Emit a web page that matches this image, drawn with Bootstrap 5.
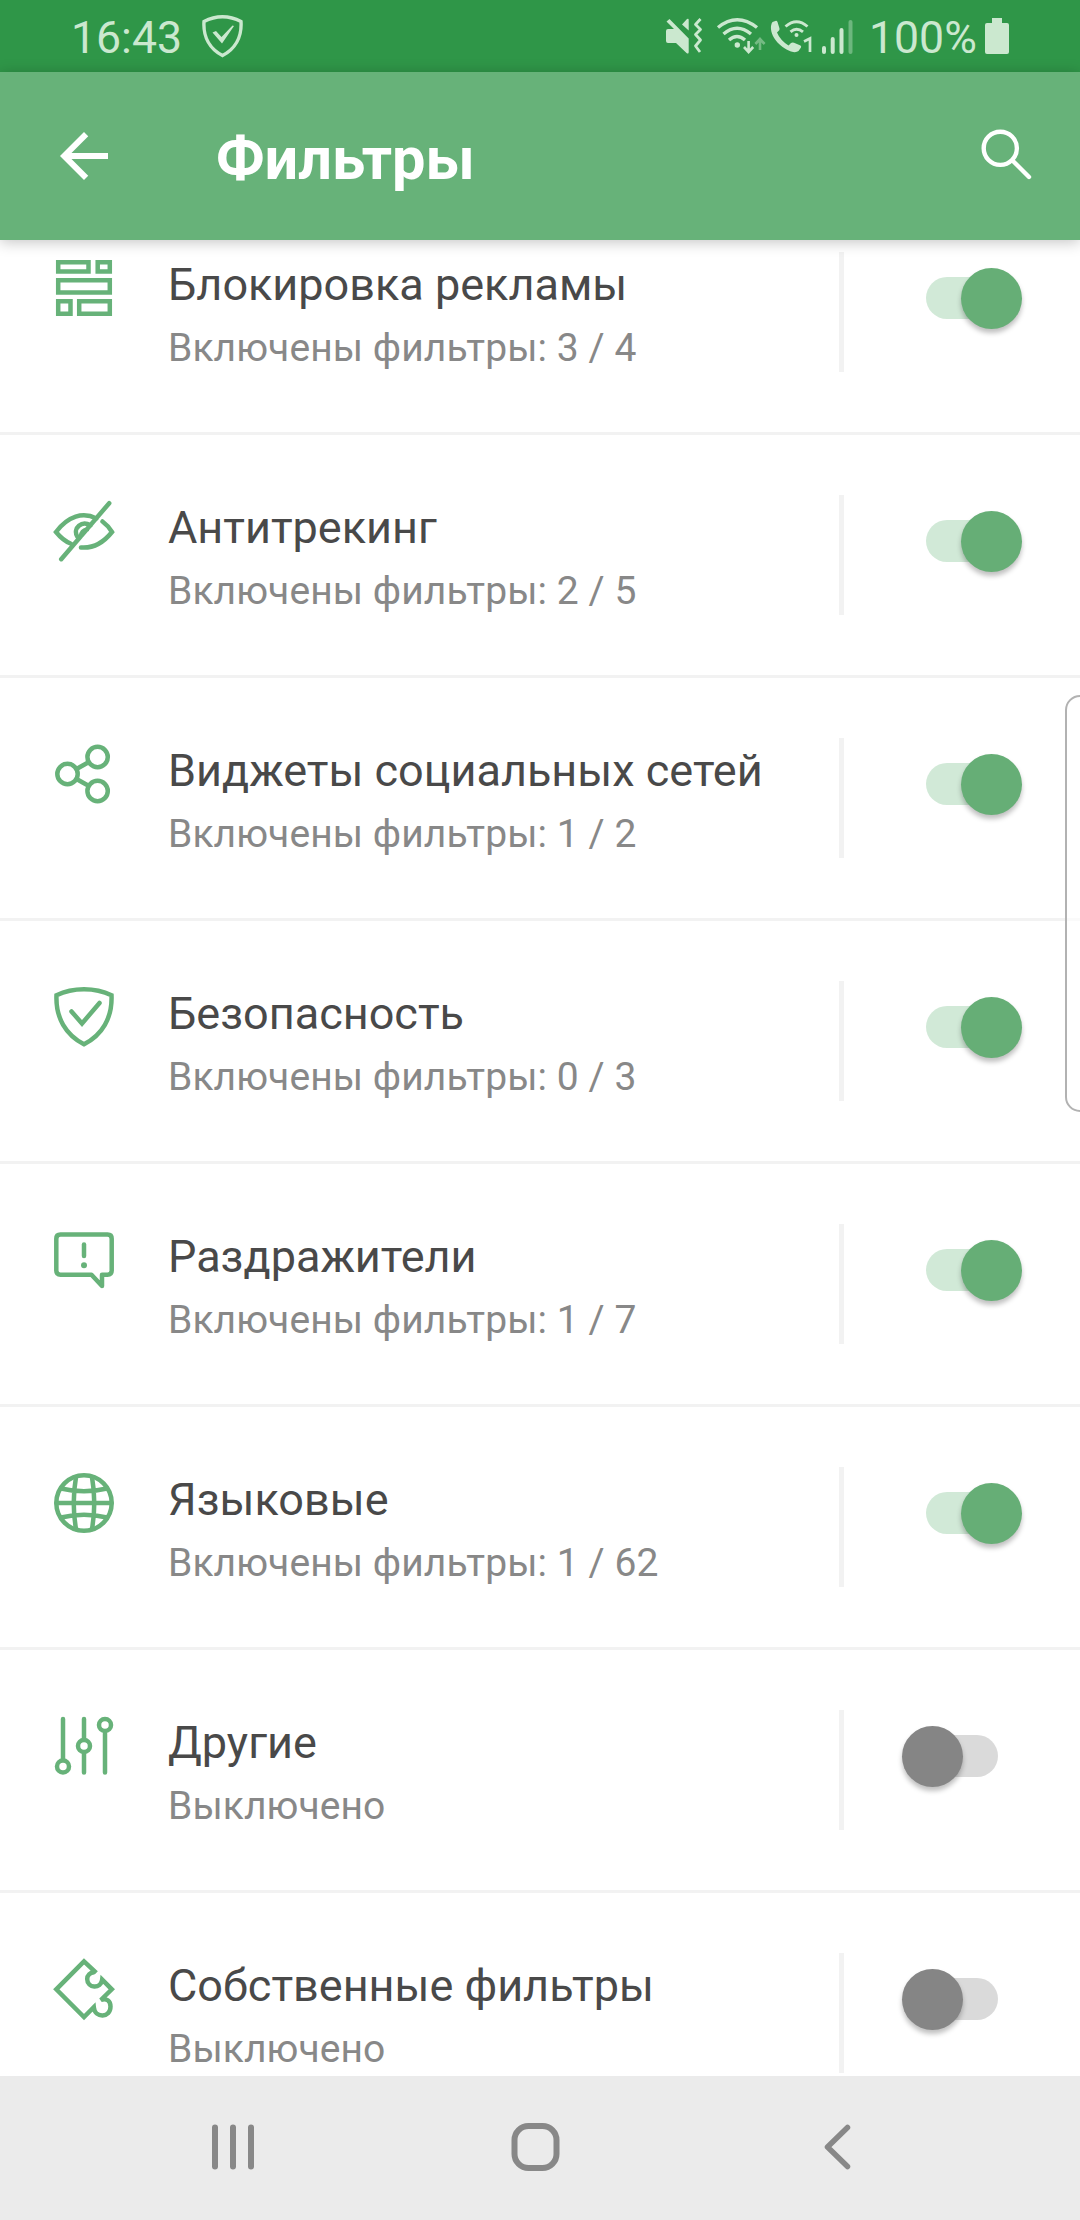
<!DOCTYPE html>
<html lang="ru">
<head>
<meta charset="utf-8">
<meta name="viewport" content="width=device-width, initial-scale=1">
<title>Фильтры</title>
<link href="https://cdn.jsdelivr.net/npm/bootstrap@5.3.0/dist/css/bootstrap.min.css" rel="stylesheet">
<style>
  :root { --leaf: #67b279; }
  body { font-family: Roboto, "Noto Sans", sans-serif; background: #fff; }
  .screen { width: 1080px; height: 2220px; }
  svg { display: block; flex: none; }
  .statusbar { height: 72px; flex: none; background: #2f9648; color: #cbe8cf; font-size: 44.6px; line-height: 72px; padding: 0 70px 0 71px; }
  .statusbar .clock { width: 131px; padding-top: 2px; }
  .statusbar .level { width: 116px; padding-top: 2px; }
  .appbar { height: 168px; flex: none; background: var(--leaf); color: #fff; padding: 0 36px 0 48px; box-shadow: 0 2px 14px rgba(0,0,0,.24); z-index: 2; }
  .appbar h1 { font-size: 59.5px; font-weight: 700; line-height: 72px; margin: 5px 0 0 96px; }
  .filters { min-height: 0; flex: 1 1 0; }
  .filter { height: 243px; flex: none; border-bottom: 3px solid #f2f2f2; padding: 60px 58px 0 48px; }
  .filter.first-row { height: 195px; padding-top: 12px; }
  .glyph { width: 72px; height: 72px; fill: none; stroke: var(--leaf); stroke-width: 4.5; stroke-linecap: round; }
  .glyph.crisp { stroke-linecap: butt; }
  .texts { margin-left: 48px; padding-top: 7px; width: 671px; }
  .texts h2 { font-size: 45px; line-height: 52px; font-weight: 400; color: #494949; margin: 0 0 14px; }
  .texts p { font-size: 39px; line-height: 46px; color: #888; margin: 0; letter-spacing: .08px; }
  .rule { width: 5px; height: 120px; background: #f2f2f2; flex: none; }
  .toggle { width: 120px; height: 61px; margin: 16px 0 0 auto; padding: 9px 24px 0; }
  .toggle::before { content: ""; display: block; width: 72px; height: 42px; border-radius: 21px; background: #dadada; }
  .toggle::after { content: ""; position: absolute; left: 0; top: 0; width: 61px; height: 61px; border-radius: 50%; background: #858585; box-shadow: 0 4px 5px rgba(0,0,0,.25); }
  .toggle.on::before { background: #d1e9d7; }
  .toggle.on::after { left: auto; right: 0; background: #66ae76; }
  .navkeys { height: 144px; flex: none; background: #ebebeb; z-index: 2; fill: none; stroke: #888; stroke-width: 6; stroke-linecap: round; stroke-linejoin: round; padding: 0 161px 0 154px; }
  .edge-handle { position: absolute; left: 1065px; top: 695px; width: 30px; height: 417px; border: 2px solid #b2b2b2; border-radius: 20px; background: rgba(255,255,255,.6); z-index: 3; }
</style>
<script src="https://cdn.jsdelivr.net/npm/bootstrap@5.3.0/dist/js/bootstrap.bundle.min.js"></script>
</head>
<body>
<div class="screen position-relative d-flex flex-column overflow-hidden">
  <header class="statusbar d-flex">
    <span class="clock">16:43</span>
    <svg width="42" height="72" viewBox="202 0 42 72" fill="none" stroke="currentColor" stroke-width="3.4"><path d="M222.500 16.800Q232 16.800 241 21.500C242 37 235 49 222.500 55.500C210 49 203 37 204 21.500Q213 16.800 222.500 16.800Z"/><path fill="currentColor" stroke="none" d="M212.500 32.500L216 31L221.500 37L232.500 25.500L234 26L222 43.500Z"/></svg>
    <svg class="ms-auto" width="50" height="72" viewBox="665 0 50 72" fill="currentColor" stroke="currentColor"><path stroke="none" d="M668 29H674L666.500 21.500L669.500 19L688.700 38.500V52Q688.700 54.500 686.500 53L676 43H668Q666 43 666 41V31Q666 29 668 29ZM682 24.500L687 19Q688.700 18 688.700 20V30.500Z"/><path fill="none" stroke-width="2.800" stroke-linejoin="round" d="M700.500 19L695.500 24.500L700.500 29.500L695.500 34.500L700.500 40L695.500 46L700 52"/></svg>
    <svg width="54" height="72" viewBox="715 0 54 72" fill="none" stroke="currentColor" stroke-width="3.400"><path d="M718 27.500Q737 12 757 27.500M723.500 34Q737 22.500 751 34M729 40Q737 33 745 40"/><circle cx="737.300" cy="45" r="2.700" fill="currentColor" stroke="none"/><path stroke-width="2.600" d="M748.600 41V52M744 47L748.600 52L753.200 47"/><path stroke-width="2.600" opacity=".45" d="M760 50V39M755.400 44L760 39L764.600 44"/></svg>
    <svg width="49" height="72" viewBox="769 0 49 72" fill="none" stroke="currentColor"><path fill="currentColor" stroke="none" d="M772.500 22L776 20.800Q777 20.800 777.500 22L779.500 28.500Q779.800 30 778.500 31L777 32.500Q780 40 788.500 45.500L791 43Q792.500 42 794 42.800L800.500 45.500Q801.500 46.500 801 47.500L798.500 51Q796 53 791 51.500C779 47 770 36 771 26Q771.500 23 772.500 22Z"/><path stroke-width="2.900" d="M785.500 26.500Q796.500 17 807.500 26.500M790.500 31.800Q796.500 26.500 803 31.800"/><circle cx="796.500" cy="35" r="2" fill="currentColor" stroke="none"/><path stroke-width="2.700" d="M804 41.500L810 38.500V52"/></svg>
    <svg width="51" height="72" viewBox="818 0 51 72" fill="none" stroke="currentColor" stroke-width="4" stroke-linecap="round"><path d="M824 48V52M832.700 39V52M841.500 30V52"/><path opacity=".4" d="M850.500 22V52"/></svg>
    <span class="level">100%</span>
    <svg width="25" height="72" viewBox="985 0 25 72" fill="currentColor"><path d="M992 18H1002V23H1007Q1009 23 1009 25V52Q1009 54 1007 54H987Q985 54 985 52V25Q985 23 987 23H992Z"/></svg>
  </header>

  <nav class="appbar d-flex align-items-center position-relative">
    <svg width="72" height="72" viewBox="0 0 24 24" fill="#fff"><path d="M20 11H7.830l5.590-5.590L12 4l-8 8 8 8 1.410-1.410L7.830 13H20v-2z"/></svg>
    <h1>Фильтры</h1>
    <svg class="ms-auto" width="72" height="72" viewBox="972 120 72 72" fill="none" stroke="#fff" stroke-width="4.400" stroke-linecap="round"><circle cx="1000.300" cy="148.300" r="16.600"/><path d="M1012.500 160.500L1029 177"/></svg>
  </nav>

  <main class="filters d-flex flex-column overflow-hidden">
    <section class="filter first-row d-flex align-items-start">
      <svg class="glyph crisp" viewBox="0 0 72 72"><path d="M10.200 10.200H40.500V19.500H10.200ZM49.700 10.200H61.800V19.500H49.700ZM10.200 28.200H61.800V40.500H10.200ZM10.200 49.200H22.500V61.800H10.200ZM31.200 49.200H61.800V61.800H31.200Z"/></svg>
      <div class="texts"><h2>Блокировка рекламы</h2><p>Включены фильтры: 3 / 4</p></div>
      <div class="rule"></div><div class="toggle on position-relative"></div>
    </section>
    <section class="filter d-flex align-items-start">
      <svg class="glyph" viewBox="0 0 72 72"><path d="M13.200 64.200L61.200 8.200M22.500 48.500Q15 45.500 8 37C20 21 35 16.500 48.500 23.500M54.500 26.500Q60 30.500 64 37C56 47 45 53.500 33 52.500M42.500 30.500C34 25 24.500 33 29.200 41.500M39 34.500Q33.500 36 33 41"/></svg>
      <div class="texts"><h2>Антитрекинг</h2><p>Включены фильтры: 2 / 5</p></div>
      <div class="rule"></div><div class="toggle on position-relative"></div>
    </section>
    <section class="filter d-flex align-items-start">
      <svg class="glyph" viewBox="0 0 72 72"><circle cx="19.500" cy="36" r="10.200"/><circle cx="49.600" cy="19" r="10.200"/><circle cx="49.600" cy="53" r="10.200"/><path d="M28.500 31L40.500 24.200M28.500 41L40.500 47.800"/></svg>
      <div class="texts"><h2>Виджеты социальных сетей</h2><p>Включены фильтры: 1 / 2</p></div>
      <div class="rule"></div><div class="toggle on position-relative"></div>
    </section>
    <section class="filter d-flex align-items-start">
      <svg class="glyph" viewBox="0 0 72 72"><path d="M36 8.200Q51 8.200 63.500 14.200C64.500 37 54 54 36 63.200C18 54 7.500 37 8.500 14.200Q21 8.200 36 8.200Z"/><path d="M23.500 30.500L34 42.500L51.500 22"/></svg>
      <div class="texts"><h2>Безопасность</h2><p>Включены фильтры: 0 / 3</p></div>
      <div class="rule"></div><div class="toggle on position-relative"></div>
    </section>
    <section class="filter d-flex align-items-start">
      <svg class="glyph" viewBox="0 0 72 72"><path stroke-linejoin="round" d="M12.500 10.500H59.500Q63.700 10.500 63.700 14.700V46.500Q63.700 50.700 59.500 50.700H54V62L43.500 50.700H12.500Q8.300 50.700 8.300 46.500V14.700Q8.300 10.500 12.500 10.500Z"/><path d="M36 20.500V32"/><circle cx="36" cy="41.200" r="3" fill="#67b279" stroke="none"/></svg>
      <div class="texts"><h2>Раздражители</h2><p>Включены фильтры: 1 / 7</p></div>
      <div class="rule"></div><div class="toggle on position-relative"></div>
    </section>
    <section class="filter d-flex align-items-start">
      <svg class="glyph" viewBox="0 0 72 72"><circle cx="36" cy="36" r="27.700"/><path d="M8.500 36H63.500M28 10Q23.500 36 28 62M44 10Q48.500 36 44 62M13 21.500Q36 27 59 21.500M13 50.500Q36 45 59 50.500"/></svg>
      <div class="texts"><h2>Языковые</h2><p>Включены фильтры: 1 / 62</p></div>
      <div class="rule"></div><div class="toggle on position-relative"></div>
    </section>
    <section class="filter d-flex align-items-start">
      <svg class="glyph" viewBox="0 0 72 72"><path d="M15 9V49.500M36 9V29.500M36 42.500V62.500M57 23.500V62.500"/><circle cx="15" cy="56.500" r="6"/><circle cx="36" cy="36" r="6"/><circle cx="57" cy="15" r="6"/></svg>
      <div class="texts"><h2>Другие</h2><p>Выключено</p></div>
      <div class="rule"></div><div class="toggle position-relative"></div>
    </section>
    <section class="filter d-flex align-items-start">
      <svg class="glyph crisp" viewBox="0 0 72 72"><path d="M48.300 19.800L36 8.300L8.300 36.300L36 64L45.800 54.200C47 65.500 62.500 65 62.500 53.500C62.500 48 58.500 44.500 52.800 47L63.800 36.300L54.200 26.600C53 36.500 39.200 35.500 39.200 26C39.200 22 42 19.600 46 19.200"/></svg>
      <div class="texts"><h2>Собственные фильтры</h2><p>Выключено</p></div>
      <div class="rule"></div><div class="toggle position-relative"></div>
    </section>
  </main>

  <footer class="navkeys d-flex align-items-center justify-content-between">
    <svg width="160" height="144" viewBox="154 2076 160 144"><path d="M215 2127.500V2166.500M233 2127.500V2166.500M251 2127.500V2166.500"/></svg>
    <svg width="60" height="144" viewBox="506.500 2076 60 144"><rect x="514" y="2126" width="42" height="42" rx="14"/></svg>
    <svg width="160" height="144" viewBox="759 2076 160 144" stroke-width="5.500"><path d="M847.500 2127.500L827.500 2147L847.500 2166.500"/></svg>
  </footer>
  <div class="edge-handle"></div>
</div>
</body>
</html>
